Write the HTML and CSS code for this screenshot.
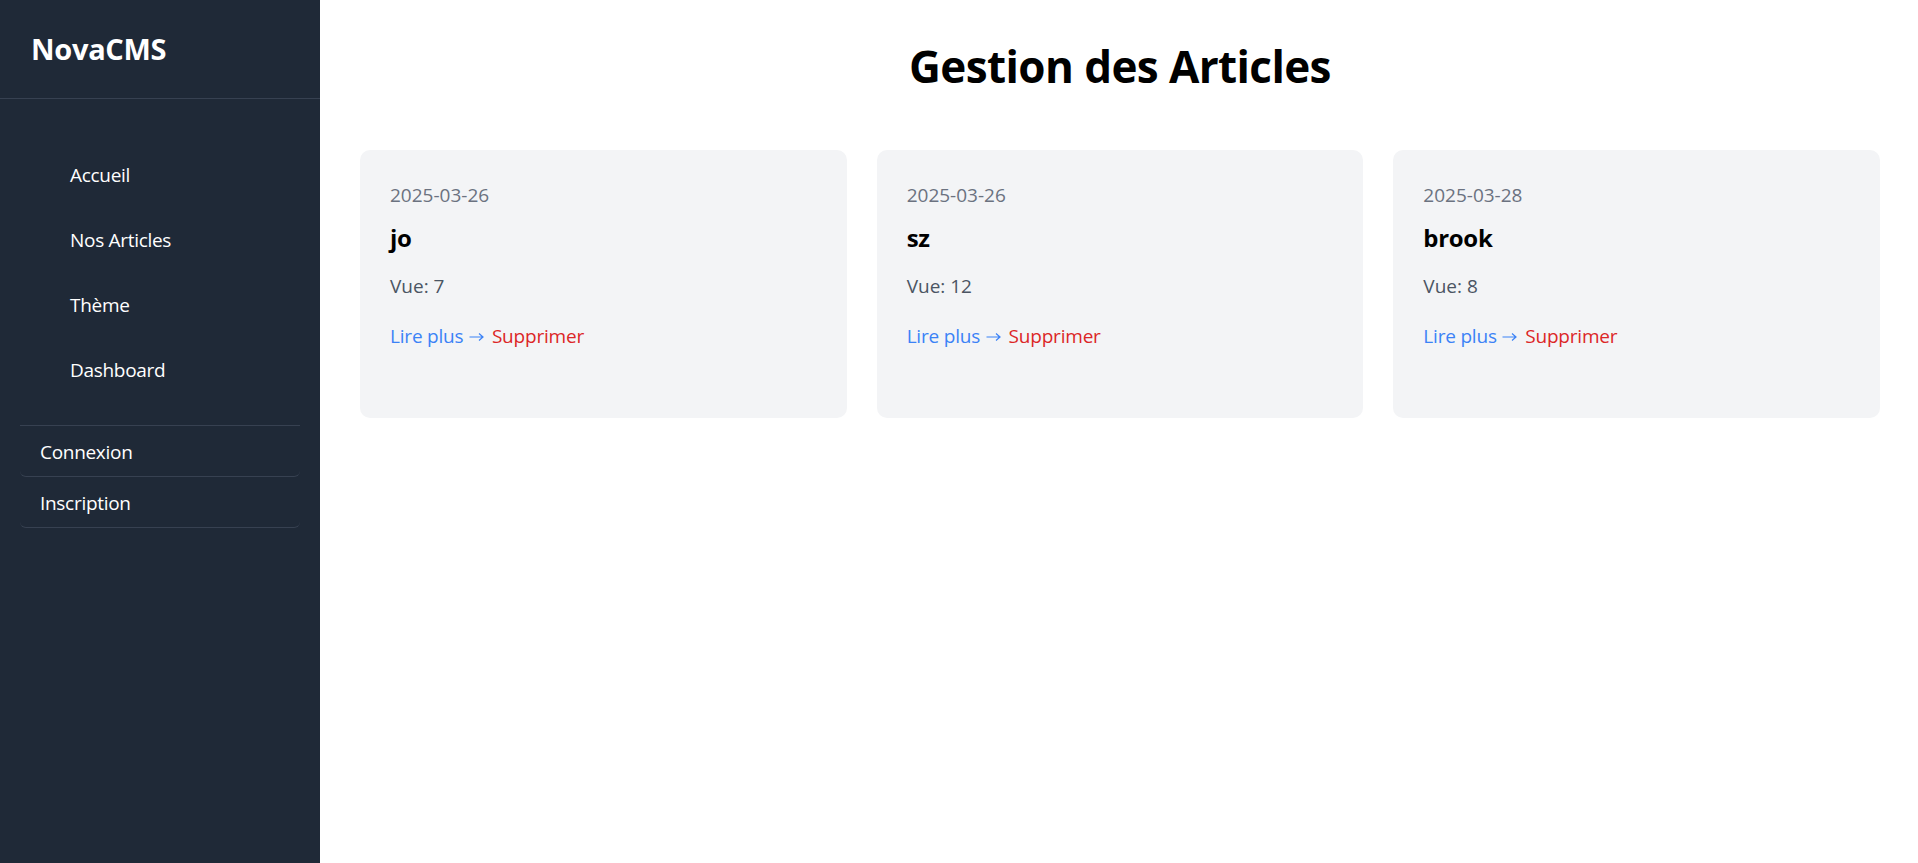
FILE: index.html
```html
<!DOCTYPE html>
<html lang="fr">
<head>
<meta charset="utf-8">
<title>NovaCMS - Gestion des Articles</title>
<link rel="stylesheet" href="styles.css">
</head>
<body>
<div class="layout">
  <aside class="sidebar">
    <div class="brand">NovaCMS</div>
    <nav class="nav">
      <a class="nav-item" href="#">Accueil</a>
      <a class="nav-item" href="#">Nos Articles</a>
      <a class="nav-item" href="#">Thème</a>
      <a class="nav-item" href="#">Dashboard</a>
    </nav>
    <div class="auth">
      <a class="auth-item" href="#">Connexion</a>
      <a class="auth-item" href="#">Inscription</a>
    </div>
  </aside>
  <main class="main">
    <h1 class="title">Gestion des Articles</h1>
    <div class="grid">
      <div class="card">
        <div class="date">2025-03-26</div>
        <h2 class="card-title">jo</h2>
        <p class="views">Vue: 7</p>
        <div class="actions"><a class="read" href="#">Lire plus <svg class="arrow" viewBox="0 0 15 10" width="15" height="10" aria-label="→"><path d="M0.5 5H14M10 1.5L14 5L10 8.5" fill="none" stroke="currentColor" stroke-width="1.2"/></svg></a> <a class="delete" href="#">Supprimer</a></div>
      </div>
      <div class="card">
        <div class="date">2025-03-26</div>
        <h2 class="card-title">sz</h2>
        <p class="views">Vue: 12</p>
        <div class="actions"><a class="read" href="#">Lire plus <svg class="arrow" viewBox="0 0 15 10" width="15" height="10" aria-label="→"><path d="M0.5 5H14M10 1.5L14 5L10 8.5" fill="none" stroke="currentColor" stroke-width="1.2"/></svg></a> <a class="delete" href="#">Supprimer</a></div>
      </div>
      <div class="card">
        <div class="date">2025-03-28</div>
        <h2 class="card-title">brook</h2>
        <p class="views">Vue: 8</p>
        <div class="actions"><a class="read" href="#">Lire plus <svg class="arrow" viewBox="0 0 15 10" width="15" height="10" aria-label="→"><path d="M0.5 5H14M10 1.5L14 5L10 8.5" fill="none" stroke="currentColor" stroke-width="1.2"/></svg></a> <a class="delete" href="#">Supprimer</a></div>
      </div>
    </div>
  </main>
</div>
</body>
</html>
```

FILE: styles.css
```css
* { box-sizing: border-box; }
html, body { margin: 0; padding: 0; height: 100%; }
body {
  font-family: "Open Sans", "Noto Sans", sans-serif;
  font-size: 20px;
  line-height: 30px;
  color: #000;
  background: #fff;
}
a { text-decoration: none; }

.layout { display: flex; min-height: 100vh; }

.sidebar {
  width: 320px;
  flex: 0 0 320px;
  background: #1f2937;
  color: #fff;
  display: flex;
  flex-direction: column;
}
.brand {
  font-size: 29px;
  font-weight: 700;
  line-height: 44px;
  padding: 27px 31px 27px 31px;
  border-bottom: 1px solid #374151;
  letter-spacing: -0.3px;
}
.nav {
  display: flex;
  flex-direction: column;
  padding: 44px 0 6px 0;
}
.nav-item {
  color: #fff;
  font-size: 19px;
  padding: 17px 0 18px 70px;
  line-height: 30px;
  letter-spacing: -0.3px;
}
.auth {
  margin: 16px 20px 0 20px;
  border-top: 1px solid #374151;
  display: flex;
  flex-direction: column;
}
.auth-item {
  color: #fff;
  font-size: 19px;
  line-height: 30px;
  padding: 11px 0 9px 20px;
  border-bottom: 1px solid #374151;
  border-radius: 6px;
  letter-spacing: -0.3px;
}

.main {
  flex: 1;
  padding: 40px 38px 40px 40px;
}
.title {
  margin: 0 0 58px 0;
  text-align: center;
  font-size: 44px;
  line-height: 52px;
  font-weight: 700;
  letter-spacing: -0.6px;
}
.grid {
  display: grid;
  grid-template-columns: repeat(3, 1fr);
  gap: 30px;
}
.card {
  background: #f3f4f6;
  border-radius: 10px;
  padding: 30px 30px 67px 30px;
}
.date {
  color: #6b7280;
  font-size: 19px;
  line-height: 30px;
}
.card-title {
  margin: 10px 0 0 0;
  font-size: 24px;
  line-height: 35px;
  font-weight: 700;
  letter-spacing: -0.3px;
}
.views {
  margin: 16px 0 0 0;
  color: #4b5563;
  font-size: 19px;
  line-height: 30px;
}
.actions {
  margin-top: 20px;
  font-size: 19px;
  line-height: 30px;
  letter-spacing: -0.2px;
}
.read { color: #3b82f6; }
.arrow {
  display: inline-block;
  vertical-align: 1px;
  margin: 0 3px 0 1px;
}
.delete { color: #dc2626; }
```
